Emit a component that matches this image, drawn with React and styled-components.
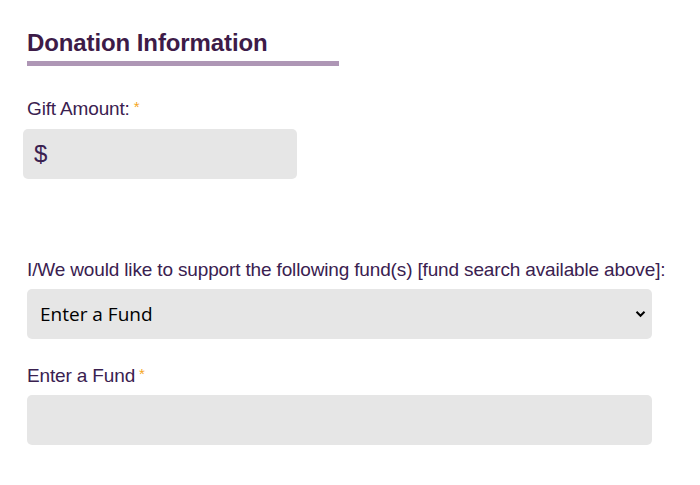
import React from "react";
import styled, { createGlobalStyle } from "styled-components";

const GlobalStyle = createGlobalStyle`
  body {
    margin: 0;
    background: #ffffff;
    font-family: "Liberation Sans", Arial, sans-serif;
  }
`

const Form = styled.div`
  width: 625px;
  padding: 30px 0 0 27px;
  display: flex;
  flex-direction: column;
`

const Heading = styled.h2`
  margin: 0;
  width: 312px;
  padding-bottom: 5px;
  border-bottom: 5px solid #ae96b5;
  font-size: 24px;
  line-height: 26px;
  font-weight: 700;
  color: #3d1b48;
  letter-spacing: -0.1px;
`

const Field = styled.div`
  display: flex;
  flex-direction: column;
  margin-top: ${p => p.top}px;
`

const Label = styled.label`
  font-size: 19px;
  line-height: 22px;
  height: 22px;
  color: #3a2150;
  letter-spacing: -0.15px;
  white-space: nowrap;
  margin-bottom: ${p => p.gap || 8}px;
`

const Star = styled.span`
  color: #f5a623;
  margin-left: 4px;
  font-size: 15px;
  line-height: 0;
  vertical-align: 3px;
`

const AmountBox = styled.div`
  width: 274px;
  height: 50px;
  margin-left: -4px;
  background: #e6e6e6;
  border-radius: 5px;
  display: flex;
  align-items: center;
  padding-left: 11px;
  box-sizing: border-box;
  font-size: 24px;
  color: #3a2150;
`

const Input = styled.input`
  width: 100%;
  height: 50px;
  border: none;
  border-radius: 5px;
  background: #e6e6e6;
  box-sizing: border-box;
  outline: none;
`

const SelectWrap = styled.div`
  position: relative;
  width: 100%;
`

const Select = styled.select`
  appearance: none;
  width: 100%;
  height: 50px;
  border: none;
  border-radius: 5px;
  background: #e6e6e6;
  padding: 0 13px;
  font-family: "Open Sans", sans-serif;
  font-size: 19px;
  color: #000;
  outline: none;
`

const Chevron = styled.svg`
  position: absolute;
  right: 6px;
  top: 21px;
  pointer-events: none;
`

export default function App() {
  return (
    <>
      <GlobalStyle />
      <Form>
        <Heading>Donation Information</Heading>
        <Field top={32}>
          <Label gap={9}>Gift Amount:<Star>*</Star></Label>
          <AmountBox>$</AmountBox>
        </Field>
        <Field top={80}>
          <Label>I/We would like to support the following fund(s) [fund search available above]:</Label>
          <SelectWrap>
            <Select defaultValue="">
              <option value="">Enter a Fund</option>
            </Select>
            <Chevron width="11" height="8" viewBox="0 0 11 8">
              <path d="M1.5 1.8l4 4 4-4" fill="none" stroke="#000" strokeWidth="2" />
            </Chevron>
          </SelectWrap>
        </Field>
        <Field top={26}>
          <Label>Enter a Fund<Star>*</Star></Label>
          <Input />
        </Field>
      </Form>
    </>
  );
}
